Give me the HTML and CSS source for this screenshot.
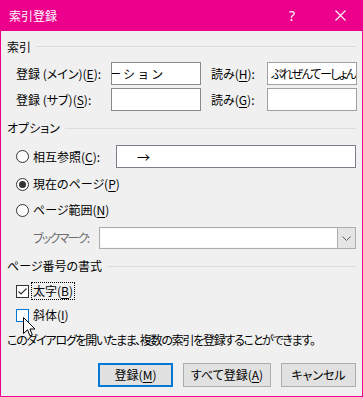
FILE: index.html
```html
<!DOCTYPE html>
<html lang="ja">
<head>
<meta charset="utf-8">
<title>索引登録</title>
<link rel="stylesheet" href="styles.css">
</head>
<body>
<div class="dialog">
  <div class="titlebar">
    <span class="title">索引登録</span>
    <span class="help">?</span>
    <svg class="close" width="11" height="11" viewBox="0 0 11 11"><path d="M0.5 0.5 L10.5 10.5 M10.5 0.5 L0.5 10.5" stroke="#fff" stroke-width="1.1" fill="none"/></svg>
  </div>
  <div class="body">
    <div class="group-head h1"><span>索引</span><span class="rule"></span></div>
    <div class="row r-main">
      <span class="lbl lbl-main">登録 (メイン)(<u>E</u>):</span>
      <div class="input in-short"><span class="scrolled">ーション</span></div>
      <span class="lbl lbl-yomi">読み(<u>H</u>):</span>
      <div class="input in-yomi"><span class="val">ぷれぜんてーしょん</span></div>
    </div>
    <div class="row r-sub">
      <span class="lbl lbl-main">登録 (サブ)(<u>S</u>):</span>
      <div class="input in-short"></div>
      <span class="lbl lbl-yomi">読み(<u>G</u>):</span>
      <div class="input in-yomi"></div>
    </div>

    <div class="group-head h2"><span>オプション</span><span class="rule"></span></div>
    <div class="row r-xref">
      <span class="radio"></span>
      <span class="lbl lbl-xref">相互参照(<u>C</u>):</span>
      <div class="input in-xref"><span class="arrow">→</span></div>
    </div>
    <div class="row r-opt r-cur">
      <span class="radio on"><span class="dot"></span></span>
      <span class="lbl">現在のページ(<u>P</u>)</span>
    </div>
    <div class="row r-opt r-range">
      <span class="radio"></span>
      <span class="lbl">ページ範囲(<u>N</u>)</span>
    </div>
    <div class="row r-bm">
      <span class="lbl lbl-bm">ブックマーク:</span>
      <div class="combo"><div class="combo-field"></div><div class="combo-btn"><svg width="9" height="5" viewBox="0 0 9 5"><path d="M0.5 0.5 L4.5 4.5 L8.5 0.5" stroke="#606060" fill="none" stroke-width="1"/></svg></div></div>
    </div>

    <div class="group-head h3"><span>ページ番号の書式</span><span class="rule"></span></div>
    <div class="row r-cb r-bold">
      <span class="check"><svg width="11" height="11" viewBox="0 0 11 11"><path d="M1.5 5.5 L4 8 L9.5 2.5" stroke="#333" stroke-width="1.2" fill="none"/></svg></span>
      <span class="lbl focus">太字(<u>B</u>)</span>
    </div>
    <div class="row r-cb r-italic">
      <span class="check hover"></span>
      <span class="lbl">斜体(<u>I</u>)</span>
    </div>
    <div class="info">このダイアログを開いたまま、複数の索引を登録することができます。</div>
    <div class="buttons">
      <button class="btn default">登録(<u>M</u>)</button>
      <button class="btn wide">すべて登録(<u>A</u>)</button>
      <button class="btn">キャンセル</button>
    </div>
  </div>
  <svg class="cursor" width="13" height="21" viewBox="0 0 13 21"><path d="M0.5 0.5 L0.5 16.5 L4.5 12.8 L7 18.8 L9.3 17.8 L6.9 12 L12 12 Z" fill="#fff" stroke="#000" stroke-width="1" stroke-linejoin="miter"/></svg>
</div>
</body>
</html>
```
FILE: styles.css
```css
* { box-sizing: border-box; }
html, body { margin: 0; padding: 0; background: #f0f0f0; }
body {
  font-family: "Noto Sans CJK JP", "Noto Sans", sans-serif;
  font-size: 12px;
  font-feature-settings: "palt";
  color: #000;
}
u { text-decoration: underline; text-underline-offset: 2px; }

.dialog {
  position: relative;
  width: 363px;
  height: 397px;
  border: 1px solid #ec008c;
  border-top: 0;
  background: #f0f0f0;
  display: flex;
  flex-direction: column;
  overflow: hidden;
}
.titlebar {
  height: 31px;
  flex: none;
  background: #ec008c;
  color: #fff;
  display: flex;
  align-items: center;
  padding-left: 8px;
}
.title { font-size: 12px; flex: 1; line-height: 1; }
.help { font-size: 14px; width: 14px; margin-right: 32px; line-height: 1; font-family: "Noto Sans", sans-serif; }
.close { margin-right: 16px; }

.body {
  flex: 1;
  display: flex;
  flex-direction: column;
  padding: 0 6px;
}
.group-head {
  display: flex;
  align-items: center;
  line-height: 1;
}
.group-head .rule { flex: 1; height: 1px; background: #dcdcdc; margin-left: 5px; }
.h1 { height: 31px; }
.h2 { height: 34px; }
.h3 { height: 28px; margin-top: 3px; }

.row { display: flex; align-items: center; padding-left: 9px; line-height: 1; }
.lbl { white-space: nowrap; flex: none; }
.input {
  height: 23px;
  background: #fff;
  border: 1px solid #7a7a7a;
  overflow: hidden;
  white-space: nowrap;
  display: flex;
  align-items: center;
  flex: none;
}
.r-main, .r-sub { height: 23px; }
.r-sub { margin-top: 3px; }
.lbl-main { width: 95px; }
.in-short { width: 90px; border-color: #8a8a8a; }
.lbl-yomi { width: 56px; margin-left: 10px; }
.in-yomi { width: 90px; border-color: #a0a0a0; }
.scrolled { letter-spacing: 2.2px; font-feature-settings: normal; margin-left: -3px; }
.val { padding-left: 3px; letter-spacing: -1.6px; }

.radio {
  width: 13px; height: 13px; border-radius: 50%;
  border: 1px solid #333; background: #fff;
  display: inline-flex; align-items: center; justify-content: center;
  flex: none; margin-right: 4px;
}
.radio .dot { width: 7px; height: 7px; border-radius: 50%; background: #333; }

.r-xref { height: 23px; }
.lbl-xref { width: 83px; }
.in-xref { flex: 1; border-color: #7a7f8a; }
.arrow { padding-left: 20px; font-size: 13px; }

.r-opt { height: 20px; }
.r-cur { margin-top: 6px; }
.r-range { margin-top: 6px; }

.r-bm { height: 22px; margin-top: 7px; padding-left: 26px; }
.lbl-bm { width: 66px; color: #6d6d6d; letter-spacing: -1.7px; }
.combo {
  flex: 1; height: 22px;
  border: 1px solid #adadad;
  display: flex;
  background: #fff;
}
.combo-field { flex: 1; border: 1px solid #f7f7f7; border-right: 0; }
.combo-btn {
  width: 18px; background: #e5e5e5; border-left: 1px solid #adadad;
  display: flex; align-items: center; justify-content: center;
}

.r-cb { height: 20px; }
.r-bold { margin-top: 1px; }
.r-italic { margin-top: 4px; }
.check {
  width: 13px; height: 13px; border: 1px solid #333; background: #fff;
  flex: none; margin-right: 4px;
  display: inline-flex; align-items: center; justify-content: center;
}
.check.hover { border-color: #0078d7; }
.focus {
  margin-left: -2px;
  padding: 2px 1px 2px 1px;
  border: 1px dotted #000;
}

.info { margin-top: 5px; height: 20px; display: flex; align-items: center; line-height: 1; letter-spacing: -1.25px; white-space: nowrap; }

.buttons {
  margin-top: 13px;
  display: flex;
  justify-content: flex-end;
  gap: 10px;
}
.btn {
  font: inherit;
  font-feature-settings: "palt";
  height: 24px;
  width: 75px;
  background: #e1e1e1;
  border: 1px solid #adadad;
  color: #000;
  padding: 0;
  line-height: 1;
}
.btn.wide { width: 88px; }
.btn.default { border: 2px solid #0078d7; }

.cursor { position: absolute; left: 22px; top: 317px; }
```
